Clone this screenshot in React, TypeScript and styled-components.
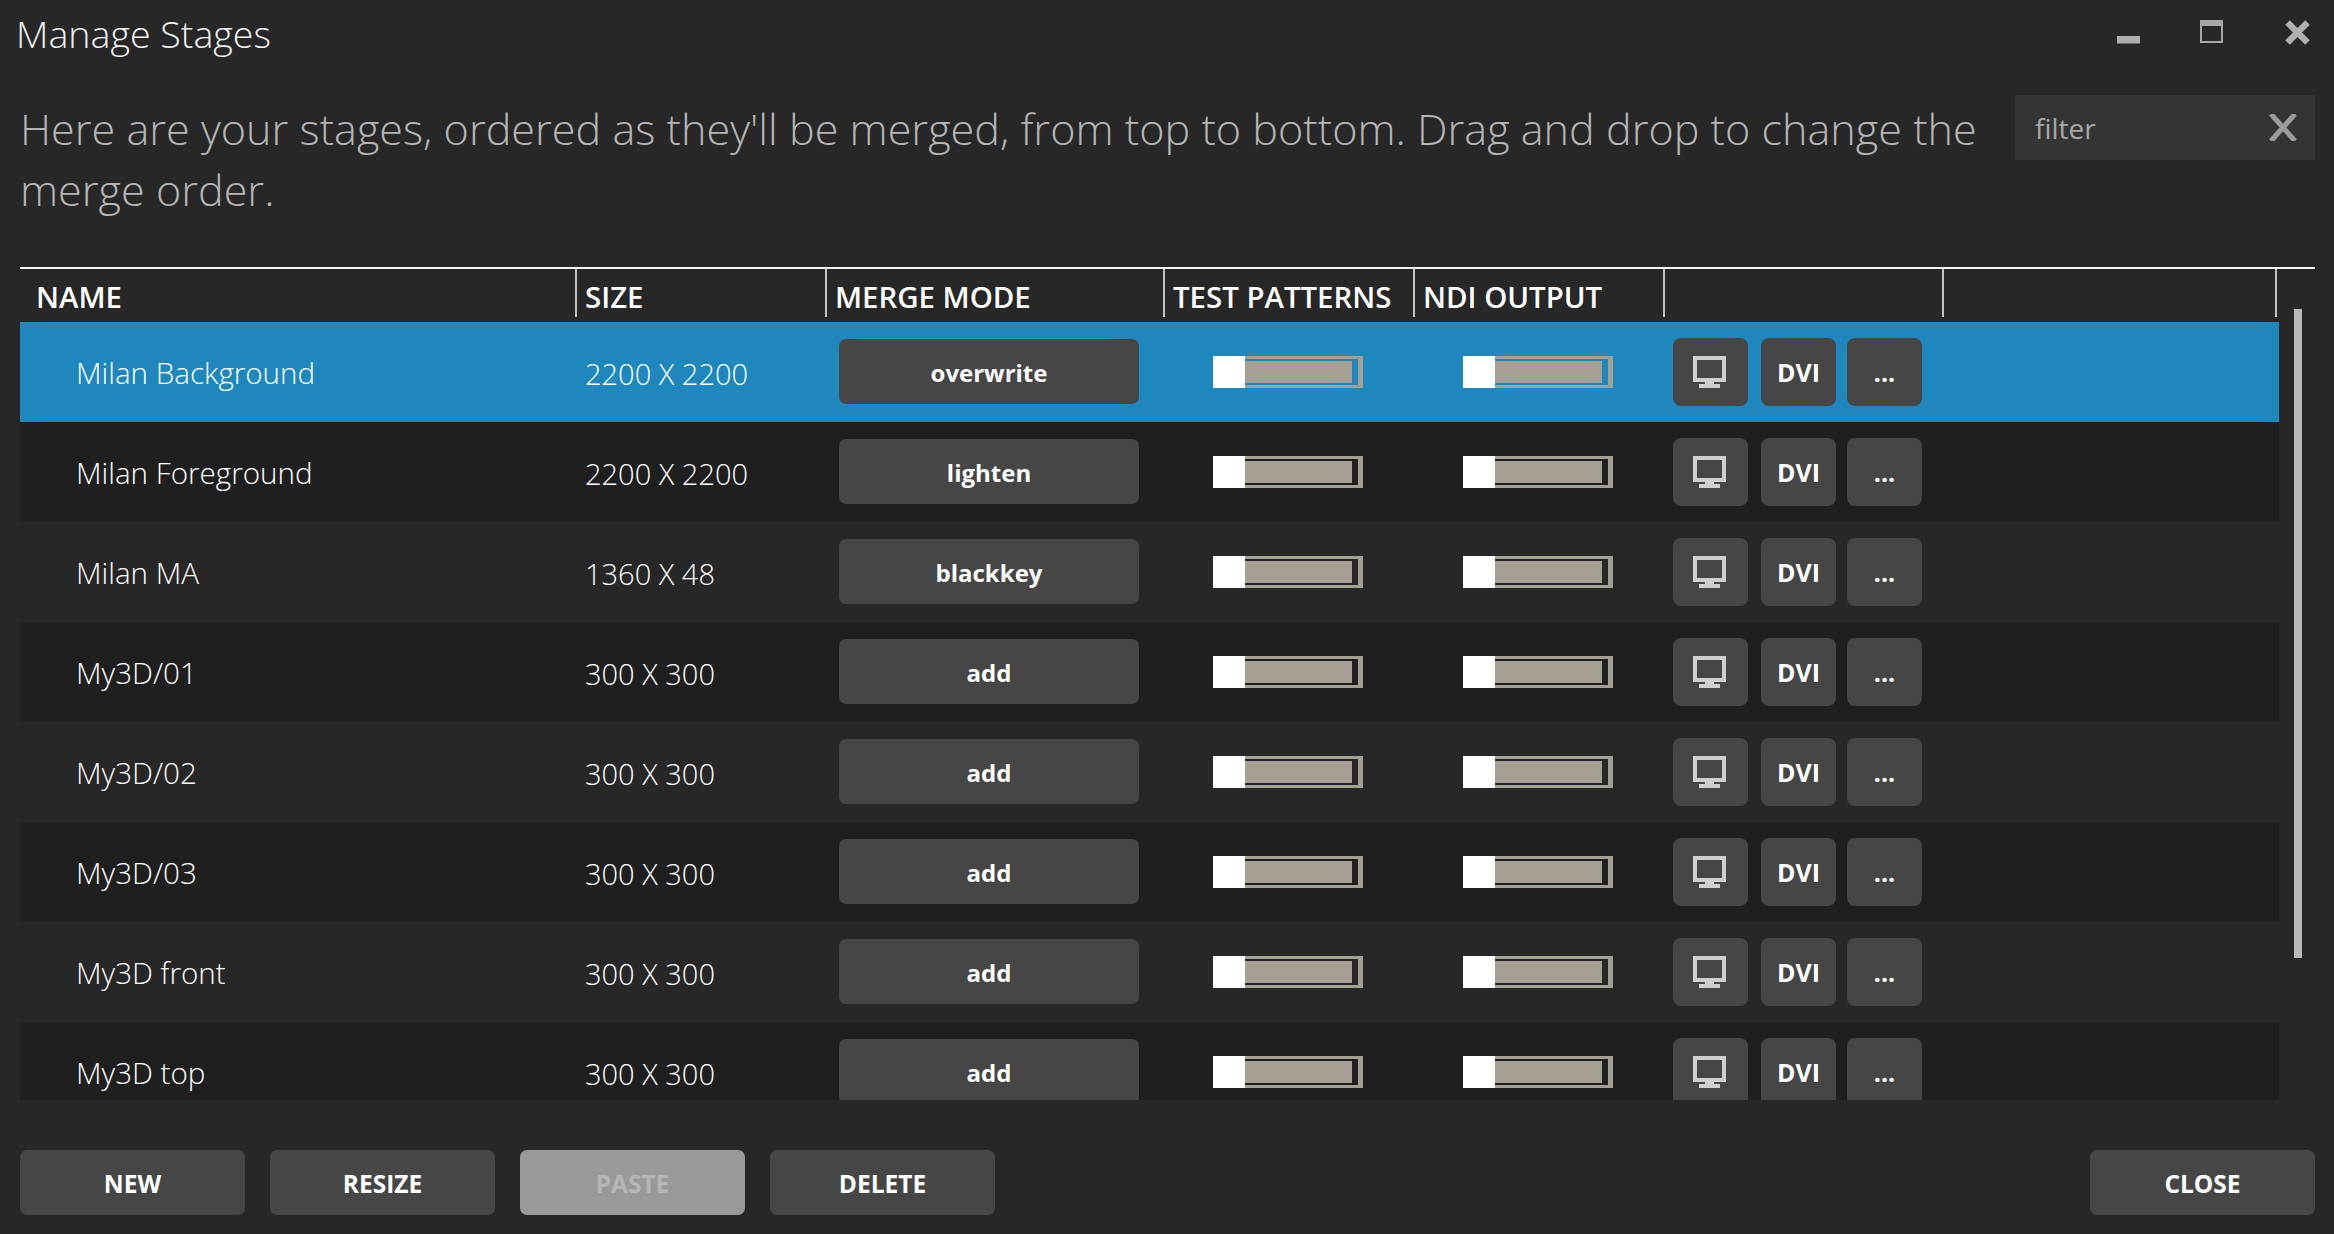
import React from "react";
import styled, { createGlobalStyle } from "styled-components";

const Global = createGlobalStyle`
  html, body { margin: 0; padding: 0; background: #272727; }
  * { box-sizing: border-box; }
`;

const COLS = "555px 250px 338px 250px 250px 279px";
const FONT = `"Open Sans", "Noto Sans", "Liberation Sans", sans-serif`;

const Window = styled.div`
  width: 2334px;
  height: 1234px;
  background: #272727;
  display: flex;
  flex-direction: column;
  font-family: ${FONT};
  overflow: hidden;
  color: #fff;
`;
const TitleBar = styled.header`
  height: 95px;
  flex: none;
  display: flex;
  justify-content: space-between;
  align-items: flex-start;
  padding: 0 24px 0 16px;
`;
const Title = styled.h1`
  margin: 9px 0 0;
  font-size: 37.6px;
  line-height: 50px;
  font-weight: 300;
  color: #f2f2f2;
`;
const Controls = styled.div`
  display: flex;
  align-items: flex-start;
  margin-top: 20px;
`;
const ControlSlot = styled.div<{ $gap: number }>`
  margin-right: ${(p) => p.$gap}px;
`;
const Intro = styled.section`
  height: 172px;
  flex: none;
  display: flex;
  justify-content: space-between;
  align-items: flex-start;
  padding: 0 19px 0 20px;
`;
const IntroText = styled.p`
  margin: 3px 0 0;
  width: 1980px;
  font-size: 43.15px;
  line-height: 61px;
  font-weight: 300;
  color: #b6b6b6;
`;
const Filter = styled.div`
  width: 300px;
  height: 65px;
  background: #343434;
  display: flex;
  align-items: center;
  justify-content: space-between;
  padding: 0 18px 0 20px;
`;
const FilterLabel = styled.span`
  font-size: 28px;
  font-weight: 400;
  color: #a8a8a8;
`;
const TableHead = styled.div`
  flex: none;
  height: 55px;
  margin: 0 19px 0 20px;
  border-top: 2px solid #f4f4f4;
  display: grid;
  grid-template-columns: ${COLS} 333px 1fr;
  align-items: start;
`;
const HeadCell = styled.div<{ $first?: boolean; $pad?: number }>`
  height: 48px;
  border-left: ${(p) => (p.$first ? "none" : "2px solid #c4c4c4")};
  padding-left: ${(p) => p.$pad ?? 8}px;
  font-size: 29.4px;
  font-weight: 600;
  line-height: 56px;
  white-space: nowrap;
  color: #fff;
`;
const BodyWrap = styled.div`
  position: relative;
  flex: none;
  height: 778px;
  margin-left: 20px;
`;
const Rows = styled.div`
  width: 2259px;
  height: 778px;
  overflow: hidden;
`;
const Row = styled.div<{ $bg: string }>`
  height: 100px;
  display: grid;
  grid-template-columns: ${COLS} 1fr;
  align-items: center;
  background: ${(p) => p.$bg};
`;
const NameCell = styled.div`
  padding-left: 56px;
  font-size: 29.6px;
  font-weight: 300;
  color: #fff;
  white-space: nowrap;
`;
const SizeCell = styled.div`
  padding: 2px 0 0 10px;
  font-size: 29px;
  font-weight: 300;
  color: #fff;
  white-space: nowrap;
`;
const MergeCell = styled.div`
  padding: 0 0 2px 14px;
`;
const MergeBtn = styled.div`
  width: 300px;
  height: 65px;
  padding-top: 2px;
  border-radius: 7px;
  background: #464646;
  display: flex;
  align-items: center;
  justify-content: center;
  font-size: 24px;
  font-weight: 700;
  color: #fff;
`;
const SliderCell = styled.div`
  padding-left: 50px;
`;
const Track = styled.div`
  position: relative;
  width: 150px;
  height: 32px;
  border: 3px solid #a6a094;
  border-right-width: 5px;
  padding: 2px 6px 2px 0;
`;
const Fill = styled.div`
  height: 100%;
  background: #a6a094;
`;
const Thumb = styled.div`
  position: absolute;
  left: -3px;
  top: -3px;
  width: 32px;
  height: 32px;
  background: #fff;
`;
const Actions = styled.div`
  display: flex;
  padding-left: 10px;
`;
const SquareBtn = styled.div<{ $gap: number }>`
  width: 75px;
  height: 68px;
  margin-right: ${(p) => p.$gap}px;
  border-radius: 8px;
  background: #464646;
  display: flex;
  align-items: center;
  justify-content: center;
  font-size: 25px;
  font-weight: 700;
  color: #fff;
`;
const MonitorSlot = styled.span`
  display: block;
  margin-right: 2px;
`;
const Scrollbar = styled.div`
  position: absolute;
  left: 2274px;
  top: -13px;
  width: 8px;
  height: 649px;
  background: #b9b9b9;
`;
const Footer = styled.footer`
  flex: none;
  margin-top: 50px;
  padding: 0 19px 0 20px;
  display: flex;
  justify-content: space-between;
`;
const FooterGroup = styled.div`
  display: flex;
  gap: 25px;
`;
const FooterBtn = styled.div<{ $disabled?: boolean }>`
  width: 225px;
  height: 65px;
  padding-top: 2px;
  border-radius: 7px;
  background: ${(p) => (p.$disabled ? "#999999" : "#464646")};
  color: ${(p) => (p.$disabled ? "#b6b6b6" : "#fff")};
  display: flex;
  align-items: center;
  justify-content: center;
  font-size: 24.5px;
  font-weight: 700;
`;

const Minimize = () => (
  <svg width="23" height="24" viewBox="0 0 23 24" style={{ display: "block" }}>
    <rect x="0" y="16" width="23" height="7.5" fill="#aeaeae" />
  </svg>
);
const Maximize = () => (
  <svg width="23" height="23" viewBox="0 0 23 23" style={{ display: "block" }}>
    <rect x="1" y="1" width="21" height="21" fill="none" stroke="#a8a8a8" strokeWidth="2" />
    <rect x="0" y="0" width="23" height="6" fill="#a8a8a8" />
  </svg>
);
const CloseIcon = () => (
  <svg width="25" height="25" viewBox="0 0 25 25" style={{ display: "block" }}>
    <path d="M2.5 2.5L22.5 22.5M22.5 2.5L2.5 22.5" stroke="#b0b0b0" strokeWidth="6.5" fill="none" />
  </svg>
);
const FilterX = () => (
  <svg width="28" height="27" viewBox="0 0 28 27" style={{ display: "block" }}>
    <path d="M2 0L26 27M26 0L2 27" stroke="#9c9c9c" strokeWidth="5" fill="none" />
  </svg>
);
const Monitor = () => (
  <svg width="33" height="32" viewBox="0 0 33 32" style={{ display: "block" }}>
    <rect x="2" y="2" width="29" height="22" fill="none" stroke="#cfcfcf" strokeWidth="4" />
    <rect x="12" y="26" width="9" height="2" fill="#cfcfcf" />
    <rect x="6" y="28" width="21" height="4" fill="#cfcfcf" />
  </svg>
);

const Slider = () => (
  <SliderCell>
    <Track>
      <Fill />
      <Thumb />
    </Track>
  </SliderCell>
);

const stages = [
  ["Milan Background", "2200 X 2200", "overwrite"],
  ["Milan Foreground", "2200 X 2200", "lighten"],
  ["Milan MA", "1360 X 48", "blackkey"],
  ["My3D/01", "300 X 300", "add"],
  ["My3D/02", "300 X 300", "add"],
  ["My3D/03", "300 X 300", "add"],
  ["My3D front", "300 X 300", "add"],
  ["My3D top", "300 X 300", "add"],
];

const rowBg = (i: number) => (i === 0 ? "#1e87bd" : i % 2 === 1 ? "#1f1f1f" : "#272727");

export default function App() {
  return (
    <Window>
      <Global />
      <TitleBar>
        <Title>Manage Stages</Title>
        <Controls>
          <ControlSlot $gap={60}>
            <Minimize />
          </ControlSlot>
          <ControlSlot $gap={62}>
            <Maximize />
          </ControlSlot>
          <CloseIcon />
        </Controls>
      </TitleBar>
      <Intro>
        <IntroText>
          Here are your stages, ordered as they'll be merged, from top to bottom. Drag and drop to change the merge order.
        </IntroText>
        <Filter>
          <FilterLabel>filter</FilterLabel>
          <FilterX />
        </Filter>
      </Intro>
      <TableHead>
        <HeadCell $first $pad={16}>NAME</HeadCell>
        <HeadCell>SIZE</HeadCell>
        <HeadCell>MERGE MODE</HeadCell>
        <HeadCell>TEST PATTERNS</HeadCell>
        <HeadCell>NDI OUTPUT</HeadCell>
        <HeadCell />
        <HeadCell />
        <HeadCell />
      </TableHead>
      <BodyWrap>
        <Rows>
          {stages.map(([name, size, mode], i) => (
            <Row key={name} $bg={rowBg(i)}>
              <NameCell>{name}</NameCell>
              <SizeCell>{size}</SizeCell>
              <MergeCell>
                <MergeBtn>{mode}</MergeBtn>
              </MergeCell>
              <Slider />
              <Slider />
              <Actions>
                <SquareBtn $gap={13}>
                  <MonitorSlot>
                    <Monitor />
                  </MonitorSlot>
                </SquareBtn>
                <SquareBtn $gap={11}>DVI</SquareBtn>
                <SquareBtn $gap={0}>...</SquareBtn>
              </Actions>
            </Row>
          ))}
        </Rows>
        <Scrollbar />
      </BodyWrap>
      <Footer>
        <FooterGroup>
          <FooterBtn>NEW</FooterBtn>
          <FooterBtn>RESIZE</FooterBtn>
          <FooterBtn $disabled>PASTE</FooterBtn>
          <FooterBtn>DELETE</FooterBtn>
        </FooterGroup>
        <FooterBtn>CLOSE</FooterBtn>
      </Footer>
    </Window>
  );
}
